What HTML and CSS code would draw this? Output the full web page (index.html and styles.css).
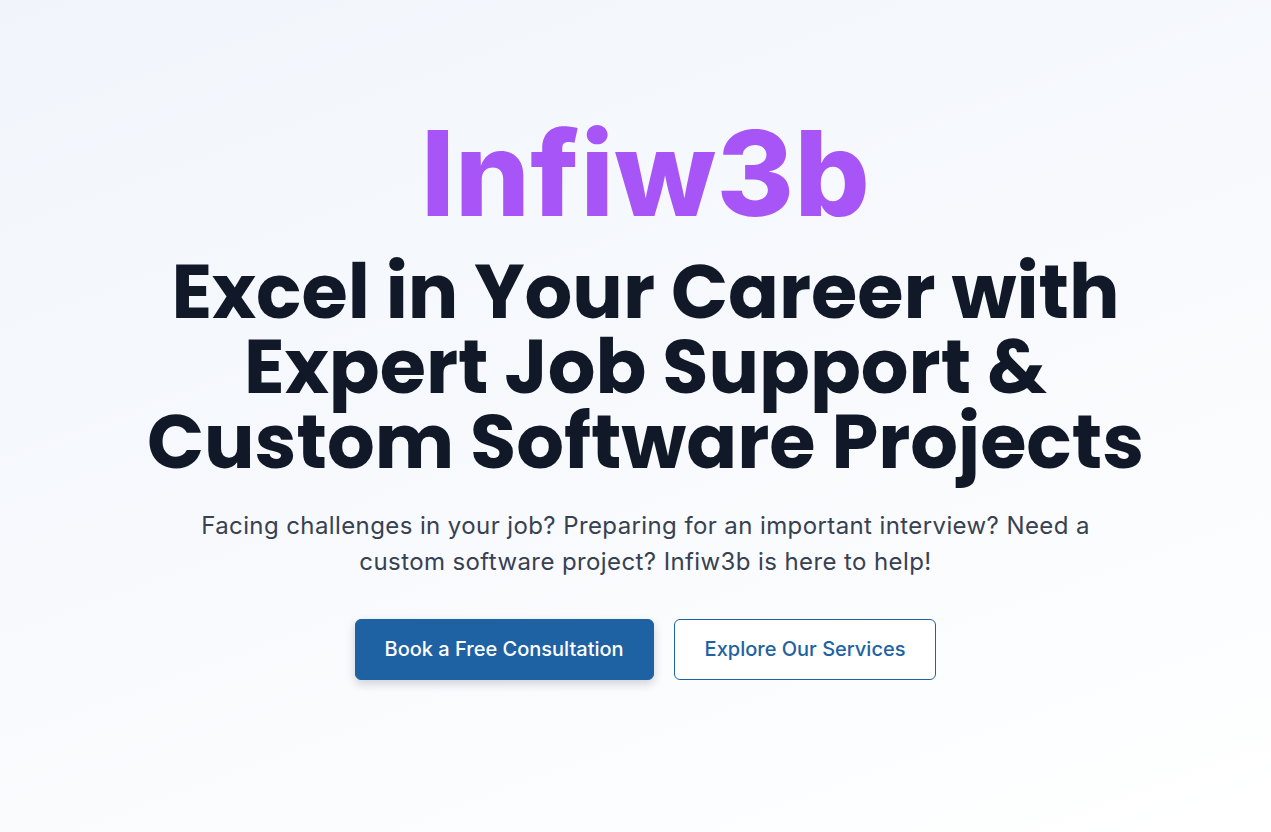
FILE: index.html
```html
<!DOCTYPE html>
<html lang="en">
<head>
<meta charset="utf-8">
<title>Infiw3b</title>
<link rel="stylesheet" href="styles.css">
</head>
<body>
<main class="hero">
  <div class="hero-inner">
    <h1 class="brand">Infiw3b</h1>
    <h2 class="headline">Excel in Your Career with<br>Expert Job Support &amp;<br>Custom Software Projects</h2>
    <p class="lead">Facing challenges in your job? Preparing for an important interview? Need a custom software project? Infiw3b is here to help!</p>
    <div class="actions">
      <a class="btn btn-primary" href="#">Book a Free Consultation</a>
      <a class="btn btn-outline" href="#">Explore Our Services</a>
    </div>
  </div>
</main>
</body>
</html>
```

FILE: styles.css
```css
* { box-sizing: border-box; }
html, body { margin: 0; padding: 0; }
body {
  font-family: Inter, "Liberation Sans", sans-serif;
  background: #ffffff;
}
.hero {
  min-height: 832px;
  background: linear-gradient(160deg, #f1f5fb 0%, #f8fafd 55%, #ffffff 100%);
  padding: 114px 0 0 20px;
}
.hero-inner {
  display: flex;
  flex-direction: column;
  align-items: center;
  text-align: center;
}
.brand {
  margin: 0;
  font-size: 118px;
  line-height: 1;
  font-weight: 800;
  color: #a855f7;
  letter-spacing: 0.4px;
}
.headline {
  margin: 22px 0 0;
  font-family: Poppins, Inter, "Liberation Sans", sans-serif;
  font-size: 75px;
  line-height: 75px;
  font-weight: 700;
  color: #111827;
}
.lead {
  margin: 29px 0 0;
  max-width: 896px;
  font-size: 24px;
  line-height: 36px;
  letter-spacing: 0.4px;
  color: #374151;
}
.actions {
  margin-top: 39px;
  display: flex;
  gap: 20px;
}
.btn {
  display: inline-block;
  padding: 16px 29px;
  font-size: 20px;
  line-height: 27px;
  font-weight: 500;
  border-radius: 6px;
  border: 1px solid #1e62a3;
  text-decoration: none;
}
.btn-primary {
  background: #1e62a3;
  color: #ffffff;
  box-shadow: 0 4px 10px rgba(17, 24, 39, 0.18);
}
.btn-outline {
  background: #ffffff;
  color: #1e62a3;
  padding: 16px 30px;
}
```
